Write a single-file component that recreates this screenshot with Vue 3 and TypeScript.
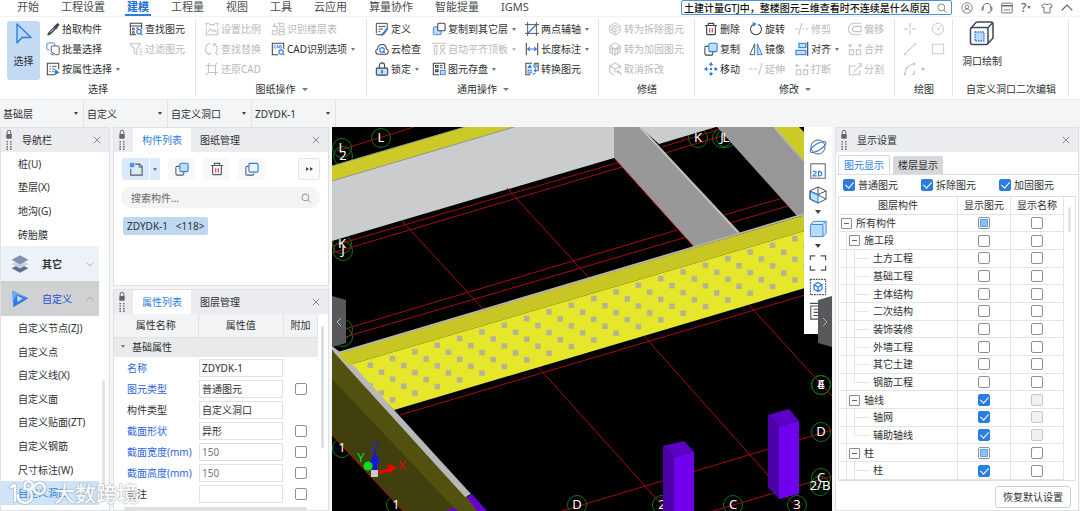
<script setup lang="ts">
import { ref } from 'vue'

interface Tool { icon: string; label: string; off?: boolean; menu?: boolean }
interface Group { key: string; title: string; menu?: boolean; big?: { icon: string; label: string }; cols: Tool[][] }

const tabs = ['开始', '工程设置', '建模', '工程量', '视图', '工具', '云应用', '算量协作', '智能提量', 'IGMS']
const activeTab = ref('建模')
const query = ref('土建计量GTJ中，整楼图元三维查看时不连续是什么原因')
const componentQuery = ref('')

const groups: Group[] = [
  {
    key: 'select', title: '选择', big: { icon: 'cursor', label: '选择' },
    cols: [
      [{ icon: 'dropper', label: '拾取构件' }, { icon: 'batch', label: '批量选择' }, { icon: 'props', label: '按属性选择', menu: true }],
      [{ icon: 'find', label: '查找图元' }, { icon: 'filter', label: '过滤图元', off: true }],
    ],
  },
  {
    key: 'drawing', title: '图纸操作', menu: true,
    cols: [
      [{ icon: 'scale', label: '设置比例', off: true }, { icon: 'replace', label: '查找替换', off: true }, { icon: 'restore', label: '还原CAD', off: true }],
      [{ icon: 'floors', label: '识别楼层表', off: true }, { icon: 'cad', label: 'CAD识别选项', menu: true }],
    ],
  },
  {
    key: 'general', title: '通用操作', menu: true,
    cols: [
      [{ icon: 'define', label: '定义' }, { icon: 'cloud', label: '云检查' }, { icon: 'padlock', label: '锁定', menu: true }],
      [{ icon: 'copyto', label: '复制到其它层', menu: true }, { icon: 'slab', label: '自动平齐顶板', off: true, menu: true }, { icon: 'archive', label: '图元存盘', menu: true }],
      [{ icon: 'axis', label: '两点辅轴', menu: true }, { icon: 'length', label: '长度标注', menu: true }, { icon: 'convert', label: '转换图元' }],
    ],
  },
  {
    key: 'repair', title: '修缮',
    cols: [[{ icon: 'cubea', label: '转为拆除图元', off: true }, { icon: 'cubeb', label: '转为加固图元', off: true }, { icon: 'cubec', label: '取消拆改', off: true }]],
  },
  {
    key: 'modify', title: '修改', menu: true,
    cols: [
      [{ icon: 'trash', label: '删除' }, { icon: 'copy', label: '复制' }, { icon: 'move', label: '移动' }],
      [{ icon: 'rotate', label: '旋转' }, { icon: 'mirror', label: '镜像' }, { icon: 'extend', label: '延伸', off: true }],
      [{ icon: 'trim', label: '修剪', off: true }, { icon: 'align', label: '对齐', menu: true }, { icon: 'merge', label: '打断', off: true }],
      [{ icon: 'offset', label: '偏移', off: true }, { icon: 'merge', label: '合并', off: true }, { icon: 'split', label: '分割', off: true }],
    ],
  },
  {
    key: 'plot', title: '绘图',
    cols: [
      [{ icon: 'point', label: '', off: true }, { icon: 'line', label: '', off: true }, { icon: 'arc', label: '', off: true, menu: true }],
      [{ icon: 'circle', label: '', off: true }, { icon: 'rect', label: '', off: true }],
    ],
  },
  { key: 'hole', title: '自定义洞口二次编辑', big: { icon: 'hole', label: '洞口绘制' }, cols: [] },
]

const selectors = [
  { name: '楼层', value: '基础层' },
  { name: '构件分类', value: '自定义' },
  { name: '构件类型', value: '自定义洞口' },
  { name: '构件', value: 'ZDYDK-1' },
]

const navTop = ['桩(U)', '垫层(X)', '地沟(G)', '砖胎膜']
const navCustom = ['自定义节点(ZJ)', '自定义点', '自定义线(X)', '自定义面', '自定义贴面(ZT)', '自定义钢筋', '尺寸标注(W)', '自定义洞口']
const activeNav = ref('自定义洞口')

interface Prop { name: string; value: string; link: boolean; extra: boolean; dim?: boolean }
const props = ref<Prop[]>([
  { name: '名称', value: 'ZDYDK-1', link: true, extra: false },
  { name: '图元类型', value: '普通图元', link: true, extra: true },
  { name: '构件类型', value: '自定义洞口', link: false, extra: false },
  { name: '截面形状', value: '异形', link: true, extra: true },
  { name: '截面宽度(mm)', value: '150', link: true, extra: true, dim: true },
  { name: '截面高度(mm)', value: '150', link: true, extra: true, dim: true },
  { name: '备注', value: '', link: false, extra: true },
])

interface Layer { name: string; level: number; show: 'on' | 'off' | 'part'; locked?: boolean; last?: boolean }
const layers: Layer[] = [
  { name: '所有构件', level: 0, show: 'part' },
  { name: '施工段', level: 1, show: 'off' },
  { name: '土方工程', level: 2, show: 'off' },
  { name: '基础工程', level: 2, show: 'off' },
  { name: '主体结构', level: 2, show: 'off' },
  { name: '二次结构', level: 2, show: 'off' },
  { name: '装饰装修', level: 2, show: 'off' },
  { name: '外墙工程', level: 2, show: 'off' },
  { name: '其它土建', level: 2, show: 'off' },
  { name: '钢筋工程', level: 2, show: 'off', last: true },
  { name: '轴线', level: 1, show: 'on', locked: true },
  { name: '轴网', level: 2, show: 'on', locked: true },
  { name: '辅助轴线', level: 2, show: 'on', locked: true, last: true },
  { name: '柱', level: 1, show: 'part' },
  { name: '柱', level: 2, show: 'on' },
]
const kinds = ['普通图元', '拆除图元', '加固图元']

/* Five staggered rows of openings that follow the slope of the wall */
const holes: { x: number; y: number }[] = []
for (let row = 0; row < 5; row++) {
  for (let k = 0; k < 21; k++) {
    const odd = row % 2
    holes.push({
      x: 367.5 + k * 22.35 + odd * 11.2,
      y: 362.5 - k * 6.66 + odd * 7 + Math.floor(row / 2) * 20.6,
    })
  }
}

const gridLines = [
  [337, 151, 414, 127], [332, 246, 620, 162], [332, 253, 622, 167], [402, 221, 484, 310], [507, 188, 590, 279],
  [345, 329, 677, 230], [345, 337, 690, 236], [662, 147, 727, 127], [665, 153, 732, 133], [724, 215, 783, 198],
  [730, 223, 788, 206], [400, 415, 832, 287], [539, 368, 662, 505], [644, 336, 800, 511], [749, 305, 832, 396],
  [562, 511, 832, 430], [713, 511, 832, 476],
]

const marks = [
  { t: 'L', x: 342, y: 148 }, { t: '2', x: 343, y: 156 }, { t: 'L', x: 381, y: 138 }, { t: 'K', x: 342, y: 244 },
  { t: 'J', x: 343, y: 251 }, { t: 'K', x: 698, y: 138 }, { t: 'J', x: 722, y: 138 }, { t: 'L', x: 726, y: 138 },
  { t: '', x: 343, y: 329 }, { t: '', x: 343, y: 337 }, { t: '1', x: 342, y: 448 }, { t: '1', x: 396, y: 505 },
  { t: 'D', x: 577, y: 505 }, { t: '2', x: 662, y: 505 }, { t: 'C', x: 733, y: 505 }, { t: '3', x: 797, y: 505 },
  { t: 'E', x: 821, y: 385 }, { t: '4', x: 821, y: 385 }, { t: 'D', x: 821, y: 432 }, { t: 'C', x: 821, y: 478 },
  { t: '2/B', x: 820, y: 486 },
]
</script>

<template>
  <div class="app">
    <svg class="defs" aria-hidden="true">
      <symbol id="i-cursor" viewBox="0 0 20 24"><path d="M3 2v19l5-5.500h9z" fill="#b9d6f8" stroke="#2c7de0" stroke-width="1.400" stroke-linejoin="round" /></symbol>
      <symbol id="i-dropper" viewBox="0 0 16 16"><path d="M9 4l4 4M10 5l2.500-3c1-1 3 1 2 2L12 7zM9.500 5.500L3 12l-1 3 3-1 6.500-6.500z" fill="currentColor" stroke="currentColor" stroke-linejoin="round" /><path d="M9 7.500L4.500 12" stroke="#fff" /></symbol>
      <symbol id="i-batch" viewBox="0 0 16 16"><path d="M4 9H2.500C1.500 9 1 8.500 1 7.500v-5C1 1.500 1.500 1 2.500 1h6C9.500 1 10 1.500 10 2.500V4" fill="none" stroke="var(--accent)" /><path d="M7.500 4.500h6a1.500 1.500 0 0 1 1.500 1.500v7a1.500 1.500 0 0 1-1.500 1.500H11L6 11V6a1.500 1.500 0 0 1 1.500-1.500z" fill="#fff" stroke="currentColor" /><path d="M5 13l4 2" stroke="currentColor" /></symbol>
      <symbol id="i-props" viewBox="0 0 16 16"><path d="M10 14.500H1.500v-13h13V8" fill="none" stroke="currentColor" stroke-width="1.200" /><path d="M4 5h1.500M4 8h1.500M4 11h1.500M7 5h5M7 8h3M7 11h2" stroke="currentColor" /><path d="M10 8l5.500 4-5.500 3z" fill="var(--accent)" /></symbol>
      <symbol id="i-find" viewBox="0 0 16 16"><path d="M8 14.500H1.500v-13h13V8M1.500 4.500h13" fill="none" stroke="currentColor" stroke-width="1.200" /><path d="M4 7h2v2H4zM4 11h2v2H4zM8 7h3" fill="none" stroke="currentColor" /><circle cx="11.500" cy="11" r="2.500" fill="none" stroke="var(--accent)" stroke-width="1.400" /><path d="M13.300 13l2 2" stroke="var(--accent)" stroke-width="1.400" /></symbol>
      <symbol id="i-filter" viewBox="0 0 16 16"><path d="M1 2h12L9 7.500V14l-3-2V7.500zM12 8h3M12 11h3M12 14h3" fill="none" stroke="currentColor" stroke-width="1.200" /></symbol>
      <symbol id="i-scale" viewBox="0 0 16 16"><path d="M1.500 5V1.500H5M11 1.500h3.500V5M5 3h6M1.500 7v7.500h13V7M3 12l3-4 3 3 2-2 2 3" fill="none" stroke="currentColor" stroke-width="1.200" /></symbol>
      <symbol id="i-replace" viewBox="0 0 16 16"><path d="M5 14A6.500 6.500 0 0 1 6 1.500M10 2a6.500 6.500 0 0 1 2 10.500M12 12.500l3 2.500M3 14h3v-3M13 2h-3v3" fill="none" stroke="currentColor" stroke-width="1.200" /></symbol>
      <symbol id="i-restore" viewBox="0 0 16 16"><path d="M1 4h11v11M4 1v11h11M12 3l2-2M4 12l-3 3" fill="none" stroke="currentColor" stroke-width="1.200" /></symbol>
      <symbol id="i-floors" viewBox="0 0 16 16"><path d="M2 5h5v9H1.500v-4H7M7 1.500h7.500v4H10V1.500M9.500 8H15v6.500H9.500zM9.500 11H15M4 1v4" fill="none" stroke="currentColor" stroke-width="1.200" /></symbol>
      <symbol id="i-cad" viewBox="0 0 16 16"><path d="M8 14.500H1.500v-13h13V8" fill="none" stroke="currentColor" stroke-width="1.200" /><path d="M5.500 4H4L3.500 5v1L4 7h1.500M6.500 7l1-3 1 3M10 4v3h1.500l.7-1V5l-.7-1z" fill="none" stroke="var(--accent)" /><circle cx="11.500" cy="11.500" r="2.500" fill="none" stroke="var(--accent)" stroke-width="1.300" /><path d="M13.500 13.500l1.800 1.500" stroke="var(--accent)" stroke-width="1.300" /></symbol>
      <symbol id="i-define" viewBox="0 0 16 16"><path d="M1.500 13V1.500H14V8L8 14.500H1.500M4 5h8M4 8h5M4 11h2" fill="none" stroke="currentColor" stroke-width="1.100" /><path d="M14 7l-5 6-1 2 2-1 4.500-6" fill="none" stroke="var(--accent)" stroke-width="1.200" /></symbol>
      <symbol id="i-cloud" viewBox="0 0 16 16"><path d="M4 14C0 14 0 8.500 3 8 3 1 13 1 13 8c3 .5 3 6-1 6z" fill="none" stroke="currentColor" stroke-width="1.200" /><circle cx="8" cy="9" r="2.600" fill="none" stroke="var(--accent)" stroke-width="1.300" /><path d="M9.500 11l2 1.500" stroke="var(--accent)" stroke-width="1.200" /></symbol>
      <symbol id="i-padlock" viewBox="0 0 16 16"><path d="M5 7V4c0-4 6-4 6 0v3" fill="none" stroke="currentColor" stroke-width="1.200" /><rect x="1.500" y="7" width="13" height="8" rx="1" fill="#c8e0fb" stroke="currentColor" stroke-width="1.200" /><path d="M8 9v4" stroke="#1c6fd8" stroke-width="1.800" /></symbol>
      <symbol id="i-copyto" viewBox="0 0 16 16"><rect x="1.500" y="5.500" width="9" height="9" rx="1.500" fill="#bfdcfb" stroke="var(--accent)" /><rect x="6.500" y="1.500" width="8.500" height="8.500" rx="1.500" fill="#fff" stroke="currentColor" stroke-width="1.200" /></symbol>
      <symbol id="i-slab" viewBox="0 0 16 16"><path d="M0 1.500h16M2.500 4v10h3V4zM10 4v4h4V4zM9 14l3-5 3 5" fill="none" stroke="currentColor" stroke-width="1.200" /></symbol>
      <symbol id="i-archive" viewBox="0 0 16 16"><path d="M8 14.500H1.500v-13h13V8M4 4h3v2H4zM4 9h3v2H4zM9 4h3M9 6.500h3" fill="none" stroke="currentColor" stroke-width="1.200" /><rect x="9.500" y="9.500" width="5.500" height="5" fill="#b8d8fa" stroke="var(--accent)" /></symbol>
      <symbol id="i-axis" viewBox="0 0 16 16"><path d="M0 3h16M3 0v16M13 0v16M0 13h16" stroke="currentColor" /><path d="M3.500 12.500l9-9" stroke="var(--accent)" stroke-width="1.500" /></symbol>
      <symbol id="i-length" viewBox="0 0 16 16"><path d="M1.500 1v14M14.500 1v14" stroke="currentColor" stroke-width="1.200" /><path d="M3 8h10M5.500 6L3 8l2.500 2M10.500 6L13 8l-2.500 2" fill="none" stroke="var(--accent)" stroke-width="1.200" /></symbol>
      <symbol id="i-convert" viewBox="0 0 16 16"><path d="M6 14.500H1v-13h7M10 1.500h5v9" fill="none" stroke="currentColor" stroke-width="1.200" /><path d="M3.500 6.500l2-3 1.500 3zM3.500 9.500H7v3H3.500zM12 7v3.500M14 9l-2 2-2-2M9 14.500l3-2" fill="none" stroke="var(--accent)" stroke-width="1.200" /><circle cx="11.500" cy="4.500" r="1.500" fill="none" stroke="var(--accent)" stroke-width="1.200" /></symbol>
      <symbol id="i-cubea" viewBox="0 0 16 16"><path d="M8 1l6 3.500v7L8 15l-6-3.500v-7zM2 4.500L8 8l6-3.500M8 8v7M5 3l6 3.500M11 3L5 6.500V13M2 8l6 3.500L14 8" fill="none" stroke="currentColor" /></symbol>
      <symbol id="i-cubeb" viewBox="0 0 16 16"><path d="M8 1l6 3.500v7L8 15l-6-3.500v-7zM2 4.500L8 8l6-3.500M8 8v7M5 6v7M11 6v7M2 8h12" fill="none" stroke="currentColor" stroke-width="1.200" /></symbol>
      <symbol id="i-cubec" viewBox="0 0 16 16"><path d="M7 15l-5-3.500v-7L8 1l6 3.500V8M2 4.500L8 8l6-3.500M8 8v4M15 15c0-3-2-4-4-4M12.500 9L10 11l2.500 2" fill="none" stroke="currentColor" stroke-width="1.200" /></symbol>
      <symbol id="i-trash" viewBox="0 0 16 16"><path d="M1 4h14M5 4V1.500h6V4M3 4v9c0 1 .5 1.500 1.500 1.500h7c1 0 1.500-.5 1.500-1.500V4" fill="none" stroke="currentColor" stroke-width="1.300" /><path d="M6.500 7v5M9.500 7v5" stroke="#e0454a" stroke-width="1.400" /></symbol>
      <symbol id="i-copy" viewBox="0 0 16 16"><path d="M5 5H2.500C1.500 5 1 5.500 1 6.500v7c0 1 .5 1.500 1.500 1.500h6c1 0 1.500-.5 1.500-1.500V11" fill="none" stroke="currentColor" stroke-width="1.200" /><rect x="5.500" y="1.500" width="9.500" height="9.500" rx="1.500" fill="#bfdcfb" stroke="var(--accent)" stroke-width="1.200" /></symbol>
      <symbol id="i-move" viewBox="0 0 16 16"><path d="M8 1v4M8 11v4M1 8h4M11 8h4" stroke="var(--accent)" stroke-width="1.200" /><path d="M8 0L5.500 3.500h5zM8 16l-2.500-3.500h5zM0 8l3.500-2.500v5zM16 8l-3.500-2.500v5z" fill="var(--accent)" /><rect x="7" y="7" width="2" height="2" fill="currentColor" /></symbol>
      <symbol id="i-rotate" viewBox="0 0 16 16"><path d="M5.500 2.500a6.300 6.300 0 1 0 5 0" fill="none" stroke="currentColor" stroke-width="1.200" /><path d="M4 0l4.500 2L5 5.500z" fill="var(--accent)" /></symbol>
      <symbol id="i-mirror" viewBox="0 0 16 16"><path d="M6.500 2v12.500H1z" fill="none" stroke="currentColor" /><path d="M9.500 2v12.500H15z" fill="#bfdcfb" stroke="var(--accent)" /></symbol>
      <symbol id="i-extend" viewBox="0 0 16 16"><path d="M0 8h4M5.500 8H9M15 1l-4 14" fill="none" stroke="currentColor" stroke-width="1.200" /></symbol>
      <symbol id="i-trim" viewBox="0 0 16 16"><path d="M0 8h5M8 8h2M12 8h3M8 1L4 15" fill="none" stroke="currentColor" stroke-width="1.200" /></symbol>
      <symbol id="i-align" viewBox="0 0 16 16"><path d="M14.500 0v16" stroke="currentColor" stroke-width="1.300" /><rect x="4.500" y="1.500" width="8" height="5" fill="#bfdcfb" stroke="var(--accent)" stroke-width="1.200" /><rect x="1" y="9.500" width="11.500" height="5" fill="#bfdcfb" stroke="var(--accent)" stroke-width="1.200" /></symbol>
      <symbol id="i-merge" viewBox="0 0 16 16"><path d="M1.500 9h5v5.500h-5zM9.500 9h5v5.500h-5zM1 4h4M3 2L1 4l2 2M15 4h-4M13 2l2 2-2 2" fill="none" stroke="currentColor" stroke-width="1.200" /></symbol>
      <symbol id="i-offset" viewBox="0 0 16 16"><path d="M15 1.500H7a6.500 6.500 0 0 0 0 13h8M15 5H8a3 3 0 0 0 0 6h7z" fill="none" stroke="currentColor" stroke-width="1.200" /></symbol>
      <symbol id="i-split" viewBox="0 0 16 16"><path d="M9 4.500H1.500v10h12V9M6 12l9-9M11 2h4v4" fill="none" stroke="currentColor" stroke-width="1.200" /></symbol>
      <symbol id="i-point" viewBox="0 0 16 16"><path d="M8 1v5M8 10v5M1 8h5M10 8h5M8 7.500v1" stroke="currentColor" stroke-width="1.200" /></symbol>
      <symbol id="i-line" viewBox="0 0 16 16"><path d="M2 14L14 2" stroke="currentColor" stroke-width="1.200" /><circle cx="2" cy="14" r="1" fill="currentColor" /><circle cx="14" cy="2" r="1" fill="currentColor" /></symbol>
      <symbol id="i-arc" viewBox="0 0 16 16"><path d="M2 14C3 7 6 3 13 2M13 10v4h-3" fill="none" stroke="currentColor" stroke-width="1.200" /><circle cx="2" cy="14" r="1.300" fill="currentColor" /><circle cx="13" cy="2" r="1.300" fill="currentColor" /></symbol>
      <symbol id="i-circle" viewBox="0 0 16 16"><circle cx="8" cy="8" r="6.500" fill="none" stroke="currentColor" /><path d="M8 8l4-4" stroke="currentColor" /><circle cx="8" cy="8" r="1" fill="currentColor" /></symbol>
      <symbol id="i-rect" viewBox="0 0 16 16"><rect x="1.500" y="2.500" width="13" height="11" fill="none" stroke="currentColor" /></symbol>
      <symbol id="i-hole" viewBox="0 0 26 26"><path d="M2 8l5-5.500C7.500 2 8 2 9 2h13c1.500 0 2 .5 2 2v14l-5 5.500M18.500 8L24 2.500" fill="none" stroke="#3c4658" stroke-width="1.500" /><rect x="1.500" y="7.500" width="17.500" height="17" rx="2" fill="#fff" stroke="#3c4658" stroke-width="1.500" /><rect x="6" y="12" width="9" height="9" fill="#b6d8fb" stroke="#2c7de0" stroke-width="1.400" stroke-dasharray="1.500 1" /></symbol>
      <symbol id="i-user" viewBox="0 0 16 16"><circle cx="8" cy="8" r="7" fill="none" stroke="currentColor" /><circle cx="8" cy="6.500" r="2.500" fill="none" stroke="currentColor" /><path d="M4 13c0-5 8-5 8 0" fill="none" stroke="currentColor" /></symbol>
      <symbol id="i-headset" viewBox="0 0 16 16"><path d="M3 10V7c0-7 10-7 10 0v3M3 7H1.500v4H3M13 7h1.500v4H13M13 11c0 2-1 3-4 3.500" fill="none" stroke="currentColor" stroke-width="1.300" /></symbol>
      <symbol id="i-calendar" viewBox="0 0 16 16"><rect x="1" y="1.500" width="14" height="13" rx="1" fill="none" stroke="currentColor" stroke-width="1.200" /><path d="M1 5h14" stroke="currentColor" stroke-width="2" /><path d="M4 10.500h2M7 10.500h2M10 10.500h2" stroke="currentColor" stroke-width="1.500" /></symbol>
      <symbol id="i-shirt" viewBox="0 0 16 16"><path d="M5 2L1 4.500 2.500 8 4 7v7.500h8V7l1.500 1L15 4.500 11 2c-1 2-5 2-6 0z" fill="none" stroke="currentColor" stroke-width="1.200" /></symbol>
      <symbol id="i-up" viewBox="0 0 16 16"><path d="M1 11l7-7 7 7" fill="none" stroke="currentColor" stroke-width="1.500" /></symbol>
      <symbol id="i-down" viewBox="0 0 16 16"><path d="M1 5l7 7 7-7" fill="none" stroke="currentColor" stroke-width="1.500" /></symbol>
      <symbol id="i-search" viewBox="0 0 16 16"><circle cx="7" cy="7" r="5.500" fill="none" stroke="currentColor" stroke-width="1.400" /><path d="M11 11l4 4" stroke="currentColor" stroke-width="1.400" /></symbol>
      <symbol id="i-close" viewBox="0 0 16 16"><path d="M1.500 1.500l13 13M14.500 1.500l-13 13" stroke="currentColor" stroke-width="1.700" /></symbol>
      <symbol id="i-grip" viewBox="0 0 8 24"><path d="M2 6V4c0-3.500 4-3.500 4 0v2" fill="none" stroke="#777" stroke-width="1.200" /><rect x="1" y="5.500" width="6" height="5" rx="1" fill="#666" /><path d="M2 13v10M6 13v10" stroke="#555" stroke-width="1.500" stroke-dasharray="1.500 1.300" /></symbol>
      <symbol id="i-layers" viewBox="0 0 24 24"><path d="M2 17l10-5 10 5-10 5.500z" fill="#5d7091" /><path d="M2 12l10-5 10 5-10 5.500z" fill="#c9d1de" /><path d="M2 7l10-5.500L22 7l-10 5.500z" fill="#8292b2" /></symbol>
      <symbol id="i-play" viewBox="0 0 24 24"><path d="M3 2l19 9L4 22z" fill="#2b7cf0" /><path d="M3 2v14l5-9 14 4z" fill="#69a8fa" /><path d="M8.500 8l7 3.500-6.500 4z" fill="#d6d8dc" /></symbol>
      <symbol id="i-newdoc" viewBox="0 0 16 16"><path d="M7 2.500h5l3 3V15H2V8" fill="none" stroke="currentColor" stroke-width="1.300" /><path d="M11.500 2.500V6H15" fill="none" stroke="currentColor" /><rect x="1" y="1" width="5" height="5" fill="#4593f2" /></symbol>
      <symbol id="i-stack" viewBox="0 0 16 16"><path d="M4 5H2.500C1.500 5 1 5.500 1 6.500v7c0 1 .5 1.500 1.500 1.500h6c1 0 1.500-.5 1.500-1.500V13" fill="none" stroke="currentColor" stroke-width="1.200" /><rect x="4.500" y="1.500" width="10.500" height="10" rx="1.500" fill="#edf5fe" stroke="var(--accent)" stroke-width="1.300" /></symbol>
      <symbol id="i-orbit" viewBox="0 0 20 20"><circle cx="10" cy="10" r="7.800" fill="#fff" stroke="currentColor" /><ellipse cx="10" cy="10" rx="10" ry="3.600" transform="rotate(-32 10 10)" fill="none" stroke="var(--accent)" stroke-width="1.200" /></symbol>
      <symbol id="i-twod" viewBox="0 0 20 20"><rect x="2" y="2" width="16" height="16" fill="#fff" stroke="currentColor" /><path d="M4.500 11.500c0-2 3.500-2 3.500 0 0 1.500-3.500 2-3.500 4h4M10.500 10.500v5c5 .5 5-5.500 0-5z" fill="none" stroke="var(--accent)" stroke-width="1.300" /></symbol>
      <symbol id="i-wire" viewBox="0 0 20 20"><path d="M10 1l9 4.500v9L10 19l-9-4.500v-9zM1 5.500l9 4 9-4M10 1v9M1 14.500L10 10l9 4.500" fill="none" stroke="currentColor" stroke-width="1.100" /><path d="M1.500 6l8.500 4v8.500l-8.500-4z" fill="#c5e0fc" stroke="var(--accent)" stroke-width="1.200" /></symbol>
      <symbol id="i-solid" viewBox="0 0 20 20"><path d="M2 5l3-3.500h14V15l-3.500 3.500" fill="#d8eafd" stroke="var(--accent)" /><path d="M15.500 5L19 1.500" stroke="var(--accent)" /><rect x="1.500" y="5" width="14" height="13.500" rx="1" fill="#b8dafc" stroke="var(--accent)" /></symbol>
      <symbol id="i-full" viewBox="0 0 20 20"><path d="M1.500 7V2H7M13 2h5.500v5M18.500 13v5H13M7 18H1.500v-5" fill="none" stroke="currentColor" stroke-width="1.300" /></symbol>
      <symbol id="i-region" viewBox="0 0 20 20"><rect x="1.500" y="1.500" width="17" height="17" fill="none" stroke="currentColor" stroke-width="1.200" stroke-dasharray="2 1" /><path d="M10 5l4.500 2.500v5L10 15l-4.500-2.500v-5zM5.500 7.500L10 10l4.500-2.500M10 10v5" fill="#e3f0fe" stroke="var(--accent)" stroke-width="1.300" /></symbol>
      <symbol id="i-sheet" viewBox="0 0 20 20"><path d="M1 1.500h18M2 4.500V19h16V4.500zM5 8h8M5 11.500h8M5 15h8" fill="none" stroke="currentColor" stroke-width="1.200" /></symbol>
    </svg>

    <header class="topbar">
      <nav class="tabs">
        <button v-for="t in tabs" :key="t" :class="['tab', { active: t === activeTab }]" @click="activeTab = t">{{ t }}</button>
      </nav>
      <div class="topright">
        <label class="helpsearch">
          <input v-model="query" aria-label="搜索帮助" />
          <svg class="ic10"><use href="#i-search" /></svg>
        </label>
        <button class="sys" aria-label="用户"><svg class="ic12"><use href="#i-user" /></svg></button>
        <button class="sys" aria-label="客服"><svg class="ic12"><use href="#i-headset" /></svg></button>
        <button class="sys" aria-label="日历"><svg class="ic12"><use href="#i-calendar" /></svg></button>
        <button class="sys help" aria-label="帮助">?<i class="caret" /></button>
        <button class="sys" aria-label="皮肤"><svg class="ic12"><use href="#i-shirt" /></svg></button>
        <button class="sys" aria-label="收起"><svg class="ic12"><use href="#i-up" /></svg></button>
      </div>
    </header>

    <section class="ribbon">
      <div v-for="g in groups" :key="g.key" :class="['group', 'g-' + g.key]">
        <div class="cols">
          <button v-if="g.big" class="big">
            <svg><use :href="'#i-' + g.big.icon" /></svg>
            <span>{{ g.big.label }}</span>
          </button>
          <div v-for="(c, i) in g.cols" :key="i" class="col">
            <button v-for="t in c" :key="t.icon + t.label" class="tool" :disabled="t.off" :aria-label="t.label || t.icon">
              <svg class="ic14"><use :href="'#i-' + t.icon" /></svg>
              <span v-if="t.label">{{ t.label }}</span>
              <i v-if="t.menu" class="caret" />
            </button>
          </div>
        </div>
        <div class="gtitle">{{ g.title }}<i v-if="g.menu" class="caret wide" /></div>
      </div>
    </section>

    <div class="selectors">
      <label v-for="s in selectors" :key="s.name" class="selector">
        <select :aria-label="s.name"><option>{{ s.value }}</option></select>
        <i class="caret dark" />
      </label>
    </div>

    <main class="main">
      <aside class="panel nav">
        <div class="phead">
          <svg class="grip"><use href="#i-grip" /></svg>
          <span class="ptitle">导航栏</span>
          <button class="close" aria-label="关闭"><svg class="ic8"><use href="#i-close" /></svg></button>
        </div>
        <div class="navbody">
          <button v-for="n in navTop" :key="n" class="navitem" @click="activeNav = n">{{ n }}</button>
          <button class="navgroup">
            <svg class="ic24"><use href="#i-layers" /></svg><span>其它</span><svg class="ic8 chev"><use href="#i-down" /></svg>
          </button>
          <button class="navgroup open">
            <svg class="ic24"><use href="#i-play" /></svg><span>自定义</span><svg class="ic8 chev"><use href="#i-up" /></svg>
          </button>
          <button v-for="n in navCustom" :key="n" :class="['navitem', { active: n === activeNav }]" @click="activeNav = n">{{ n }}</button>
        </div>
        <i class="thumb" />
      </aside>

      <div class="middle">
        <section class="panel components">
          <div class="phead">
            <svg class="grip"><use href="#i-grip" /></svg>
            <button class="ptab active">构件列表</button>
            <button class="ptab">图纸管理</button>
            <button class="close" aria-label="关闭"><svg class="ic8"><use href="#i-close" /></svg></button>
          </div>
          <div class="toolbar">
            <div class="newbtn">
              <button aria-label="新建"><svg class="ic14"><use href="#i-newdoc" /></svg></button>
              <button class="drop" aria-label="新建选项"><i class="caret" /></button>
            </div>
            <button class="tb" aria-label="复制"><svg class="ic14"><use href="#i-copy" /></svg></button>
            <button class="tb" aria-label="删除"><svg class="ic14"><use href="#i-trash" /></svg></button>
            <button class="tb" aria-label="层间复制"><svg class="ic14"><use href="#i-stack" /></svg></button>
            <button class="more" aria-label="更多"><i /><i /></button>
          </div>
          <label class="search">
            <input v-model="componentQuery" placeholder="搜索构件..." aria-label="搜索构件" />
            <svg class="ic10"><use href="#i-search" /></svg>
          </label>
          <button class="component">ZDYDK-1&nbsp;&nbsp; &lt;118&gt;</button>
        </section>

        <section class="panel properties">
          <div class="phead">
            <svg class="grip"><use href="#i-grip" /></svg>
            <button class="ptab active">属性列表</button>
            <button class="ptab">图层管理</button>
            <button class="close" aria-label="关闭"><svg class="ic8"><use href="#i-close" /></svg></button>
          </div>
          <table class="ptable">
            <thead>
              <tr><th class="c1">属性名称</th><th>属性值</th><th class="c3">附加</th></tr>
            </thead>
            <tbody>
              <tr class="sub"><td colspan="3"><i class="caret" />基础属性</td></tr>
              <tr v-for="(p, i) in props" :key="p.name">
                <td :class="['pname', { link: p.link }]"><label :for="'prop' + i">{{ p.name }}</label></td>
                <td><input :id="'prop' + i" v-model="p.value" :class="['pval', { dim: p.dim }]" type="text" /></td>
                <td class="pextra"><input v-if="p.extra" type="checkbox" class="cb" :aria-label="'附加 ' + p.name" /></td>
              </tr>
            </tbody>
          </table>
          <i class="vthumb" />
          <i class="hthumb" />
        </section>
      </div>

      <section class="scene" aria-label="三维视图">
        <svg class="view" viewBox="332 127 500 384" preserveAspectRatio="xMinYMin slice">
          <rect x="332" y="127" width="500" height="384" fill="#000" />
          <g fill="none" stroke="#0b7a12" stroke-width="1">
            <circle v-for="(m, i) in marks" :key="i" :cx="m.x" :cy="m.y" r="9.500" />
          </g>
          <polygon points="332,166 465,127 514,127 332,181" fill="#cbca26" />
          <polygon points="332,181 514,127 614,127 614,158 332,241" fill="#cbcccd" />
          <path d="M332 166L465 127M332 181L514 127" stroke="#9a9a90" stroke-width="1" />
          <polygon points="640,127 716,127 659,144" fill="#cbcccd" />
          <g stroke="#a80c0c" stroke-width="1">
            <line v-for="(l, i) in gridLines" :key="i" :x1="l[0]" :y1="l[1]" :x2="l[2]" :y2="l[3]" />
          </g>
          <polygon points="614,127 640,127 739,233 694,247 614,158" fill="#989898" />
          <path d="M640 127L739 233" stroke="#c2c2c2" stroke-width="2" />
          <path d="M614 158L694 247" stroke="#c01010" stroke-width="1" />
          <polygon points="717,127 774,127 804,163 804,216 797,216" fill="#979797" />
          <polygon points="774,127 799,127 804,132 804,161" fill="#cbca26" />
          <path d="M774 127L804 162" stroke="#bcbcbc" stroke-width="1.500" />
          <polygon points="336,354 832,207 832,223 349,365" fill="#c7c625" />
          <polygon points="349,365 832,223 832,280 394,410" fill="#e6e62b" />
          <path d="M338 353L832 206" stroke="#b5b5ac" stroke-width="2" />
          <rect v-for="(h, i) in holes" :key="i" :x="h.x" :y="h.y" width="5.500" height="5.500" fill="#b4b394" />
          <polygon points="332,351 336,353 467,496 479,511 403,511 332,435" fill="#525110" />
          <polygon points="332,379 457,511 403,511 332,435" fill="#403f0d" />
          <path d="M332 435L403 511" stroke="#b01010" />
          <polygon points="332,346 340,352 353,365 471,494 465,497 347,367 332,350" fill="#b8b8b8" />
          <polygon points="338,354 345,352 355,363 349,366" fill="#c7c625" />
          <polygon points="467,497 472,494 487,511 477,511" fill="#6400d0" />
          <polygon points="445,511 455,508 458,511" fill="#6400d0" />
          <g class="marks">
            <text v-for="(m, i) in marks" :key="i" :x="m.x" :y="m.y + 4">{{ m.t }}</text>
          </g>
          <polygon points="663,446 684,441 694,452 674,457" fill="#5c00c4" />
          <polygon points="663,446 674,457 674,511 663,511" fill="#4e00a8" />
          <polygon points="674,457 694,452 694,511 674,511" fill="#7000ee" />
          <polygon points="768,415 789,409 799,421 779,426" fill="#5c00c4" />
          <polygon points="768,415 779,426 779,499 768,487" fill="#4e00a8" />
          <polygon points="779,426 799,421 799,494 779,499" fill="#7000ee" />
          <path d="M378 473L392 469" stroke="#f00000" stroke-width="3" />
          <polygon points="388,464 397,467 389,474" fill="#f00000" />
          <path d="M375 470V458" stroke="#1414f0" stroke-width="4" />
          <polygon points="375,452 380,463 370,463" fill="#1414f0" />
          <circle cx="368" cy="466" r="4.500" fill="#00e020" />
          <rect x="371" y="470" width="7" height="7" fill="#c9c9c9" />
          <g class="axes">
            <text x="375" y="452" fill="#1a1af5">Z</text>
            <text x="361" y="462" fill="#00e020">Y</text>
            <text x="402" y="470" fill="#f00000">X</text>
          </g>
        </svg>
        <div class="viewtools">
          <button aria-label="动态观察"><svg class="ic18"><use href="#i-orbit" /></svg></button>
          <button aria-label="二维"><svg class="ic18"><use href="#i-twod" /></svg></button>
          <button aria-label="视角"><svg class="ic18"><use href="#i-wire" /></svg></button>
          <button class="dd" aria-label="视角选项"><i class="caret dark" /></button>
          <button aria-label="实体"><svg class="ic18"><use href="#i-solid" /></svg></button>
          <button class="dd" aria-label="实体选项"><i class="caret dark" /></button>
          <button aria-label="全屏"><svg class="ic18"><use href="#i-full" /></svg></button>
          <button aria-label="局部三维"><svg class="ic18"><use href="#i-region" /></svg></button>
          <button aria-label="显示设置"><svg class="ic18"><use href="#i-sheet" /></svg></button>
        </div>
        <button class="fold left" aria-label="收起左侧"><svg viewBox="0 0 8 12"><path d="M6 2L2 6l4 4" fill="none" stroke="#b8b8b8" /></svg></button>
        <button class="fold right" aria-label="收起右侧"><svg viewBox="0 0 8 12"><path d="M2 2l4 4-4 4" fill="none" stroke="#b8b8b8" /></svg></button>
      </section>

      <aside class="panel display">
        <div class="phead">
          <svg class="grip"><use href="#i-grip" /></svg>
          <span class="ptitle">显示设置</span>
          <button class="close" aria-label="关闭"><svg class="ic8"><use href="#i-close" /></svg></button>
        </div>
        <div class="dtabs">
          <button class="dtab active">图元显示</button>
          <button class="dtab">楼层显示</button>
        </div>
        <div class="kinds">
          <label v-for="k in kinds" :key="k"><input type="checkbox" class="cb" checked />{{ k }}</label>
        </div>
        <div class="dwrap">
          <table class="dtable">
            <thead>
              <tr><th>图层构件</th><th class="d2">显示图元</th><th class="d3">显示名称</th></tr>
            </thead>
            <tbody>
              <tr v-for="(l, i) in layers" :key="i">
                <td :class="['lname', 'lv' + l.level, { last: l.last }]">
                  <button v-if="l.level < 2" class="exp" :aria-label="'折叠 ' + l.name" />
                  <span v-else class="dash" />
                  <span>{{ l.name }}</span>
                </td>
                <td><input type="checkbox" class="cb" :checked="l.show === 'on'" :indeterminate="l.show === 'part'" :aria-label="'显示图元 ' + l.name" /></td>
                <td><input type="checkbox" class="cb" :disabled="l.locked" :aria-label="'显示名称 ' + l.name" /></td>
              </tr>
            </tbody>
          </table>
          <div class="dscroll"><i /></div>
        </div>
        <div class="dfoot"><button class="reset">恢复默认设置</button></div>
      </aside>

      <div class="watermark" aria-hidden="true">
        <svg viewBox="0 0 42 26">
          <g fill="none" stroke-linecap="round" stroke-linejoin="round">
            <path d="M3 7l4-2v16M10 15a7 7 0 1 0 6-6M17 7a4 4 0 1 1 5 2M26 9a5.500 5.500 0 1 0 4-6c-3 1-4 4-6 6" stroke="#a9b2bc" stroke-width="4" />
            <path d="M3 7l4-2v16M10 15a7 7 0 1 0 6-6M17 7a4 4 0 1 1 5 2M26 9a5.500 5.500 0 1 0 4-6c-3 1-4 4-6 6" stroke="#fff" stroke-width="2.600" />
          </g>
        </svg>
        <span>大数跨境</span>
      </div>
    </main>
  </div>
</template>

<style>
body { margin: 0; background: #f4f5f6; }
</style>

<style scoped>
.app {
  --accent: #2c7de0;
  display: flex;
  flex-direction: column;
  height: 100vh;
  overflow: hidden;
  font: 10px/14px "Noto Sans", "Noto Sans CJK SC", sans-serif;
  color: #2e3033;
  background: #f4f5f6;
}
.app * { box-sizing: border-box; }
.defs { position: absolute; width: 0; height: 0; }
button, input, select { font: inherit; color: inherit; border: 0; background: none; padding: 0; margin: 0; border-radius: 0; }
button { display: inline-flex; align-items: center; white-space: nowrap; }
svg { display: block; flex: none; }
.ic8 { width: 8px; height: 8px; }
.ic10 { width: 10px; height: 10px; }
.ic12 { width: 12px; height: 12px; }
.ic14 { width: 14px; height: 14px; }
.ic18 { width: 18px; height: 18px; }
.ic24 { width: 22px; height: 20px; }
.caret { display: inline-block; flex: none; width: 0; height: 0; border: 2px solid transparent; border-top: 3px solid #777; border-bottom: 0; }
.caret.wide { border-width: 3px 3px 0; margin-left: 6px; vertical-align: 2px; }
.caret.dark { border-top-color: #444; }

.topbar { display: flex; justify-content: space-between; height: 16px; background: #fff; flex: none; }
.tabs { display: flex; gap: 18px; padding-left: 15px; }
.tab { height: 16px; padding: 0 2px; font-size: 11px; color: #4a4c50; border-bottom: 2px solid transparent; line-height: 14px; }
.tab.active { color: #1c6fd8; font-weight: 700; border-color: #2c7de0; }
.topright { display: flex; align-items: center; gap: 8px; padding-right: 7px; color: #666; height: 15px; }
.helpsearch { display: flex; align-items: center; width: 271px; height: 15px; margin-right: 1px; border: 1px solid #4a93dc; border-radius: 2px; padding: 0 4px 0 2px; background: #fff; color: #777; }
.helpsearch input { flex: 1; min-width: 0; height: 13px; color: #111; font-weight: 500; outline: 0; }
.help { font-size: 12px; width: 12px; gap: 1px; font-weight: 500; }

.ribbon { display: grid; grid-template-columns: 196fr 171fr 232fr 96fr 200fr 58fr 116fr 11fr; height: 84px; flex: none; background: #fff; border-top: 1px solid #f3f3f3; border-bottom: 1px solid #e6e6e6; }
.group { display: flex; flex-direction: column; position: relative; min-width: 0; }
.group::after { content: ""; position: absolute; right: 0; top: 2px; bottom: 3px; border-right: 1px solid #e4e4e4; }
.cols { display: grid; padding-top: 2px; height: 62px; }
.g-select .cols { grid-template-columns: 39px 83px 1fr; padding-left: 7px; }
.g-drawing .cols { grid-template-columns: 66px 1fr; padding-left: 9px; }
.g-general .cols { grid-template-columns: 57px 93px 1fr; padding-left: 8px; }
.g-repair .cols { padding-left: 9px; }
.g-modify .cols { grid-template-columns: 45px 46px 53px 1fr; padding-left: 9px; }
.g-plot .cols { grid-template-columns: 28px 1fr; padding-left: 8px; }
.g-hole .cols { padding-left: 9px; }
.col { display: flex; flex-direction: column; align-items: flex-start; }
.tool { height: 20px; gap: 2px; color: #3f444c; }
.tool span { color: #2e3033; }
.tool .caret { margin-left: 2px; }
.tool:disabled { color: #c2c2c2; --accent: #c2c2c2; }
.tool:disabled span { color: #b9b9b9; }
.tool:disabled .caret { border-top-color: #b5b5b5; }
.big { flex-direction: column; }
.g-select .big { width: 33px; height: 59px; margin-top: 2px; border-radius: 3px; background: #c2daf4; padding-top: 1px; }
.g-select .big svg { width: 20px; height: 24px; margin-bottom: 8px; }
.g-hole .big { width: 40px; height: 59px; padding-top: 1px; }
.g-hole .big svg { width: 26px; height: 26px; margin-bottom: 8px; }
.gtitle { text-align: center; line-height: 20px; }

.selectors { display: flex; height: 27px; flex: none; }
.selector { display: flex; align-items: center; position: relative; width: 84px; border-right: 1px solid #e2e3e4; }
.selector select { appearance: none; width: 100%; height: 27px; padding-left: 3px; outline: 0; }
.selector .caret { position: absolute; right: 5px; }

.main { flex: 1; min-height: 0; display: grid; grid-template-columns: 110px 216px minmax(0, 1fr) 244px; column-gap: 3px; position: relative; padding-right: 1px; }
.panel { display: flex; flex-direction: column; position: relative; min-height: 0; background: #fff; border: 1px solid #dfe0e2; }
.phead { display: flex; align-items: center; flex: none; height: 24px; background: #eaecef; padding: 0 7px 0 4px; }
.grip { width: 8px; height: 22px; }
.ptitle { margin-left: 9px; }
.close { margin-left: auto; color: #777; width: 10px; justify-content: center; }
.ptab { height: 24px; padding: 0 9px; }
.ptab.active { color: #2c7de0; background: #fff; margin-left: 7px; }

.navbody { flex: 1; min-height: 0; display: flex; flex-direction: column; padding: 0 10px 5px 0; }
.navitem { flex: 1 1 0; min-height: 0; padding-left: 17px; }
.navitem.active { color: #2c7de0; background: #cfe4fa; }
.navgroup { flex: none; height: 35px; padding: 0 5px 0 8px; background: #edf1f8; font-weight: 700; }
.navgroup span { margin-left: 11px; }
.navgroup .chev { margin-left: auto; color: #999; }
.navgroup.open { background: #d0d1d3; color: #3d63d8; font-weight: 500; }
.thumb { position: absolute; right: 4px; top: 66%; bottom: 8px; width: 3px; border-radius: 2px; background: #e3e4e6; }

.middle { display: flex; flex-direction: column; gap: 3px; min-height: 0; }
.components { flex: 5 1 0; }
.properties { flex: 7 1 0; overflow: hidden; }
.toolbar { display: flex; align-items: center; gap: 8px; padding: 6px 8px 7px; }
.toolbar button { height: 22px; justify-content: center; color: #555b66; }
.newbtn { display: flex; gap: 1px; }
.newbtn button { width: 27px; background: #dbeafb; border-radius: 2px 0 0 2px; }
.newbtn .drop { width: 10px; border-radius: 0 2px 2px 0; }
.toolbar .tb { width: 27px; background: #f8f8f9; border-radius: 2px; }
.toolbar .more { width: 22px; margin-left: auto; border: 1px solid #e2e3e5; border-radius: 3px; background: #fafafa; gap: 1px; }
.more i { border: 2px solid transparent; border-left: 3px solid #444; border-right: 0; }
.search { display: flex; align-items: center; height: 21px; margin: 0 8px 0 7px; padding: 0 9px 0 10px; border-radius: 10px; background: #f4f4f5; color: #888; }
.search input { flex: 1; min-width: 0; outline: 0; }
.search input::placeholder { color: #666; opacity: 1; }
.component { align-self: flex-start; height: 18px; margin: 9px 0 0 9px; padding: 0 4px; border-radius: 2px; background: #bfd8f1; }

.ptable { border-collapse: collapse; table-layout: fixed; width: 204px; }
.ptable th, .ptable td { padding: 0; font-weight: 400; height: 21px; }
.ptable th { background: #f2f3f4; border-right: 1px solid #e2e3e4; border-bottom: 1px solid #e2e3e4; height: 23px; }
.ptable .c1 { width: 84px; }
.ptable .c3 { width: 34px; }
.ptable .sub td { height: 20px; background: #e9eaeb; padding-left: 7px; }
.sub .caret { margin-right: 7px; vertical-align: 3px; }
.ptable .pname { padding-left: 13px; white-space: nowrap; }
.link { color: #2f66dd; }
.pval { display: block; width: 84px; height: 18px; padding: 0 2px; margin-left: 1px; border: 1px solid #e1e2e3; background: #fff; outline: 0; }
.pval.dim { color: #777; }
.pextra { text-align: center; }
.vthumb { position: absolute; right: 4px; top: 36px; height: 122px; width: 3px; border-radius: 2px; background: #dddfe2; }
.hthumb { position: absolute; left: 10px; bottom: 0; width: 183px; height: 3px; border-radius: 2px; background: #dddfe2; }

.cb { appearance: none; display: block; flex: none; position: relative; width: 12px; height: 12px; margin: 0 auto; border: 1px solid #8d8f92; border-radius: 2px; background: #fff; }
.cb:checked { background: #2c7de0; border-color: #2c7de0; }
.cb:checked::before { content: ""; position: absolute; left: 3px; top: 0; width: 4px; height: 7px; border: solid #fff; border-width: 0 1px 1px 0; transform: rotate(42deg); }
.cb:indeterminate::before { content: ""; position: absolute; inset: 1px; background: #8cc2fb; border: 1px solid #5a9fe8; }
.cb:disabled { background: #f0f1f2; border-color: #c4c6c8; }

.scene { position: relative; min-height: 0; overflow: hidden; background: #000; }
.view { width: 100%; height: 100%; }
.marks text { fill: #fff; font: 13px "Noto Sans", sans-serif; text-anchor: middle; }
.axes text { font: 13px "Noto Sans", sans-serif; text-anchor: middle; }
.viewtools { position: absolute; right: 0; top: 0; width: 28px; height: 207px; overflow: hidden; display: flex; flex-direction: column; align-items: center; padding-top: 8px; background: #fff; color: #4b5059; }
.viewtools button { flex: none; height: 24px; }
.viewtools .dd { height: 10px; }
.viewtools .dd .caret { border-width: 4px 3px 0; }
.fold { position: absolute; top: 169px; width: 14px; height: 51px; background: #58595a; justify-content: center; }
.fold svg { width: 8px; height: 12px; }
.fold.left { left: 0; clip-path: polygon(0 0, 100% 8%, 100% 92%, 0 100%); }
.fold.right { right: 0; clip-path: polygon(0 8%, 100% 0, 100% 100%, 0 92%); }

.dtabs { display: flex; gap: 3px; align-items: flex-end; height: 23px; padding-left: 2px; border-bottom: 1px solid #dfe0e2; }
.dtab { height: 18px; padding: 0 5px; background: #d6d7d8; border-radius: 2px 2px 0 0; }
.dtab.active { height: 19px; background: #fff; color: #2c7de0; border: 1px solid #cfd9e4; border-bottom: 0; }
.kinds { display: flex; gap: 23px; align-items: center; height: 20px; padding-left: 7px; }
.kinds label { display: flex; align-items: center; gap: 3px; }
.dwrap { flex: 1; min-height: 0; display: flex; margin: 1px 2px 0; border: 1px solid #dfe0e2; }
.dtable { flex: 1; border-collapse: collapse; table-layout: fixed; }
.dtable th, .dtable td { padding: 0; border: 1px solid #e3e4e5; border-width: 0 1px 1px 0; font-weight: 400; line-height: 13px; }
.dtable th { height: 17px; }
.d2 { width: 53px; }
.d3 { width: 53px; }
.lname { position: relative; }
.lname > * { display: inline-block; vertical-align: middle; }
.exp { width: 11px; height: 11px; margin: 0 4px 0 2px; border: 1px solid #8a8c8f; border-radius: 1px; background: linear-gradient(#666, #666) center / 5px 1px no-repeat #fff; position: relative; }
.lv1 .exp { margin: 0 4px 0 10px; }
.lv1::before, .lv2::before, .lv2::after { content: ""; position: absolute; top: 0; bottom: 0; left: 7px; border-left: 1px solid #e3e4e5; }
.lv2::after { left: 15px; }
.lv2.last::after { bottom: 50%; }
.dash { width: 14px; height: 1px; margin: 0 4px 0 16px; background: #e3e4e5; }
.dscroll { width: 11px; padding-top: 10px; }
.dscroll i { display: block; width: 3px; height: 25px; margin-left: 4px; border-radius: 2px; background: #e3e4e6; }
.dfoot { display: flex; justify-content: flex-end; padding: 5px 7px 2px; height: 29px; }
.reset { height: 22px; padding: 0 7px; border: 1px solid #cdd0d3; border-radius: 3px; background: #fff; }

.watermark { position: absolute; left: 8px; bottom: 5px; display: flex; align-items: center; gap: 4px; pointer-events: none; opacity: 0.85; }
.watermark svg { width: 42px; height: 26px; }
.watermark span { font-size: 21px; line-height: 26px; font-weight: 500; color: #fff; text-shadow: 0 0 1px #8c949c, 0 0 2px #8c949c; }
</style>
